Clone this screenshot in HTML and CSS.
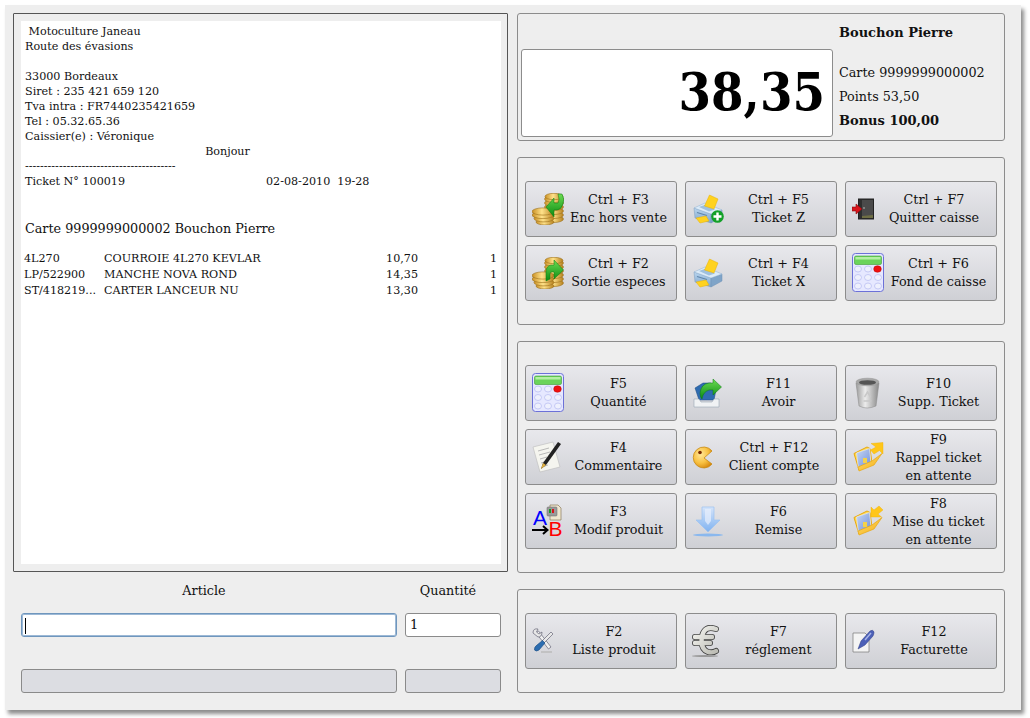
FILE: index.html
```html
<!DOCTYPE html>
<html lang="fr">
<head>
  <meta charset="utf-8">
  <title>Caisse</title>
  <link rel="stylesheet" href="styles.css">
</head>
<body>

<svg class="defs" width="0" height="0">
  <defs>
    <linearGradient id="gold" x1="0" y1="0" x2="1" y2="0">
      <stop offset="0" stop-color="#c98f24"/><stop offset=".45" stop-color="#ffe28a"/><stop offset="1" stop-color="#b57f1c"/>
    </linearGradient>
    <radialGradient id="pac" cx=".4" cy=".35" r=".7">
      <stop offset="0" stop-color="#ffe89a"/><stop offset=".6" stop-color="#f8c040"/><stop offset="1" stop-color="#d88a10"/>
    </radialGradient>
    <linearGradient id="green" x1="0" y1="0" x2="0" y2="1">
      <stop offset="0" stop-color="#6cdc52"/><stop offset="1" stop-color="#0a8a12"/>
    </linearGradient>
    <linearGradient id="steel" x1="0" y1="0" x2="1" y2="0">
      <stop offset="0" stop-color="#9a9a9a"/><stop offset=".4" stop-color="#ececec"/><stop offset="1" stop-color="#888"/>
    </linearGradient>
    <linearGradient id="printer" x1="0" y1="0" x2="0" y2="1">
      <stop offset="0" stop-color="#b8d4ee"/><stop offset="1" stop-color="#7ea6cc"/>
    </linearGradient>
    <linearGradient id="sky" x1="0" y1="0" x2="0" y2="1">
      <stop offset="0" stop-color="#d5e4fa"/><stop offset="1" stop-color="#7fb2f0"/>
    </linearGradient>
    <linearGradient id="folder" x1="0" y1="0" x2="1" y2="1">
      <stop offset="0" stop-color="#ffe070"/><stop offset="1" stop-color="#f4ac14"/>
    </linearGradient>
    <linearGradient id="page" x1="0" y1="0" x2="1" y2="1">
      <stop offset="0" stop-color="#c8d8f4"/><stop offset="1" stop-color="#6f8ed8"/>
    </linearGradient>
    <linearGradient id="euro" x1="0" y1="0" x2="1" y2="1">
      <stop offset="0" stop-color="#f4f4f0"/><stop offset="1" stop-color="#bcbcb4"/>
    </linearGradient>

    <symbol id="coins" viewBox="0 0 32 32">
      <g fill="url(#gold)" stroke="#9c6f17" stroke-width=".6">
        <ellipse cx="22" cy="26" rx="9.500" ry="3.500"/>
        <ellipse cx="22" cy="22" rx="9.500" ry="3.500"/>
        <ellipse cx="22" cy="18" rx="9.500" ry="3.500"/>
        <ellipse cx="22" cy="14" rx="9.500" ry="3.500"/>
        <ellipse cx="22" cy="10" rx="9.500" ry="3.500"/>
        <ellipse cx="22" cy="6" rx="9.500" ry="3.500"/>
        <ellipse cx="22" cy="3.500" rx="9" ry="3.200"/>
        <ellipse cx="13" cy="29" rx="9" ry="3"/>
        <ellipse cx="12" cy="25.500" rx="10" ry="3.400"/>
        <ellipse cx="11" cy="22" rx="11" ry="3.600"/>
        <ellipse cx="11" cy="18.500" rx="11" ry="3.600"/>
      </g>
    </symbol>

    <symbol id="printer-body" viewBox="0 0 32 32">
      <path d="M2 15 L19 21 V30 L3 25Z" fill="url(#printer)" stroke="#7d9cbc" stroke-width=".5"/>
      <path d="M19 21 L30 17 V24 L19 30Z" fill="#7fa4c8" stroke="#6f90b4" stroke-width=".5"/>
      <path d="M2 15 L13 10 L30 17 L19 21Z" fill="#dcebf8" stroke="#8fb0d0" stroke-width=".5"/>
      <path d="M7 14 L14 11.500 L23 16.500 L17 18.500Z" fill="#9fc0de"/>
      <path d="M12.500 13 L17.500 2 L26 6 L22 16Z" fill="#ffd21f" stroke="#e8b000" stroke-width=".5"/>
      <path d="M5 19.500 L15 22.500" stroke="#5f86ac" stroke-width="1.200"/>
      <path d="M4 25 L14 23 L17 28 L8 30Z" fill="#ffd21f" stroke="#e8b000" stroke-width=".5"/>
    </symbol>

    <symbol id="calc" viewBox="0 0 32 40">
      <rect x=".5" y=".5" width="31" height="38" rx="3" fill="#e6e8ff" stroke="#6c71d8"/>
      <rect x="2.500" y="3" width="27" height="8.500" rx="1.500" fill="#6bd45a" stroke="#3e9c34" stroke-width=".6"/>
      <rect x="3.500" y="4" width="25" height="2.500" fill="#b4f0a4"/>
      <g fill="#eef0fd" stroke="#b4baf0" stroke-width=".7">
        <ellipse cx="6" cy="16" rx="3.500" ry="3"/><ellipse cx="16" cy="16" rx="3.500" ry="3"/>
        <ellipse cx="6" cy="24.500" rx="3.500" ry="3"/><ellipse cx="16" cy="24.500" rx="3.500" ry="3"/><ellipse cx="26" cy="24.500" rx="3.500" ry="3"/>
        <ellipse cx="6" cy="33" rx="3.500" ry="3"/><ellipse cx="16" cy="33" rx="3.500" ry="3"/><ellipse cx="26" cy="33" rx="3.500" ry="3"/>
      </g>
      <ellipse cx="25.500" cy="16" rx="3.800" ry="3.300" fill="#f01010" stroke="#b00" stroke-width=".5"/>
    </symbol>

    <symbol id="folder-doc" viewBox="0 0 32 32">
      <path d="M2 12.500 L15 6 L18 7.500 L20 22 L7 29Z" fill="#ffd850" stroke="#e8a810" stroke-width="1"/>
      <path d="M4.500 12 L17.500 7.500 L19 22.500 L6.500 27.500Z" fill="url(#page)" stroke="#e8eefa" stroke-width=".6"/>
      <path d="M11 17 h4 v5 h-4z" fill="#f4d24a"/>
      <path d="M7 30 L6 26 L20 20 L30 12.500 L22 24Z" fill="url(#folder)" stroke="#e8a810" stroke-width=".7"/>
    </symbol>
  </defs>
</svg>

<div class="window">

  <div class="left">
    <div class="ticketFrame">
      <div class="ticket">
        <div class="shop">
          <div>&nbsp;Motoculture Janeau</div>
          <div>Route des évasions</div>
          <div>&nbsp;</div>
          <div>33000 Bordeaux</div>
          <div>Siret : 235 421 659 120</div>
          <div>Tva intra : FR7440235421659</div>
          <div>Tel : 05.32.65.36</div>
          <div>Caissier(e) : Véronique</div>
          <div class="hello">Bonjour</div>
          <div>----------------------------------------</div>
          <div class="ticketNo"><span>Ticket N° 100019</span><span>02-08-2010&nbsp;&nbsp;19-28</span></div>
        </div>
        <div class="cardLine">Carte 9999999000002 Bouchon Pierre</div>
        <div class="lines">
          <span>4L270</span><span>COURROIE 4L270 KEVLAR</span><span class="num">10,70</span><span class="num">1</span>
          <span>LP/522900</span><span>MANCHE NOVA ROND</span><span class="num">14,35</span><span class="num">1</span>
          <span>ST/418219...</span><span>CARTER LANCEUR NU</span><span class="num">13,30</span><span class="num">1</span>
        </div>
      </div>
    </div>

    <div class="entry">
      <div class="entryLabel">Article</div>
      <div class="entryLabel">Quantité</div>
      <div class="field focus"><span class="caret"></span></div>
      <div class="field">1</div>
      <div class="field off"></div>
      <div class="field off"></div>
    </div>
  </div>

  <div class="right">

    <div class="panel total">
      <div class="amount">38,35</div>
      <div class="client">
        <div class="clientName">Bouchon Pierre</div>
        <div class="clientCard">Carte 9999999000002</div>
        <div class="clientRow">Points 53,50</div>
        <div class="clientBonus">Bonus 100,00</div>
      </div>
    </div>

    <div class="panel keys">
      <div class="key">
        <svg class="icon" viewBox="0 0 32 32"><use href="#coins"/><path d="M14 14 L22 5 V10 H26 Q28 7 26 1 L30 1 Q33 6 31 11 Q29 17 25 17 H22 V24Z" fill="url(#green)" stroke="#0a7a10" stroke-width=".5"/></svg>
        <div class="keyText">Ctrl + F3<br>Enc hors vente</div>
      </div>
      <div class="key">
        <svg class="icon" viewBox="0 0 32 32"><use href="#printer-body"/><circle cx="25.500" cy="23.500" r="6.300" fill="#12a028"/><path d="M25.500 19.500 V27.500 M21.500 23.500 H29.500" stroke="#fff" stroke-width="2.400"/></svg>
        <div class="keyText">Ctrl + F5<br>Ticket Z</div>
      </div>
      <div class="key narrow">
        <svg class="icon" viewBox="0 0 24 32"><rect x="6.500" y="6" width="15" height="20" fill="#2e2e2e" stroke="#222"/><path d="M10 7 H21 V25 H10Z" fill="#4a4a4a"/><path d="M10 25 H21 V22 L10 23Z" fill="#6e6e44"/><circle cx="12" cy="15" r=".7" fill="#ddd"/><path d="M0 14 H4 V11 L10 16 L4 21 V18 H0Z" fill="#d8141c" stroke="#8a0a0e" stroke-width=".6"/></svg>
        <div class="keyText">Ctrl + F7<br>Quitter caisse</div>
      </div>
      <div class="key">
        <svg class="icon" viewBox="0 0 32 32"><use href="#coins"/><path d="M31.500 13 L22 3 V8 H19 Q14 9 14 15 V24 L18 22 V17 Q18 15 20 15 H22 V22Z" fill="url(#green)" stroke="#0a7a10" stroke-width=".5"/></svg>
        <div class="keyText">Ctrl + F2<br>Sortie especes</div>
      </div>
      <div class="key">
        <svg class="icon" viewBox="0 0 32 32"><use href="#printer-body"/></svg>
        <div class="keyText">Ctrl + F4<br>Ticket X</div>
      </div>
      <div class="key">
        <svg class="icon tall" viewBox="0 0 32 40"><use href="#calc"/></svg>
        <div class="keyText">Ctrl + F6<br>Fond de caisse</div>
      </div>
    </div>

    <div class="panel keys">
      <div class="key">
        <svg class="icon tall" viewBox="0 0 32 40"><use href="#calc"/></svg>
        <div class="keyText">F5<br>Quantité</div>
      </div>
      <div class="key">
        <svg class="icon" viewBox="0 0 32 32"><path d="M3 11 L11 6 H19 L24 13 L22 23 H7Z" fill="#2f6bb0" stroke="#1d4a80" stroke-width=".5"/><path d="M2 22 H7 L9 25 H20 L22 22 H27 V30 H2Z" fill="#f0f2f4" stroke="#8a9aa8" stroke-width=".5"/><path d="M29.500 10 L21 2 V6 H17 Q9 7 8 16 Q8 20 10 22 Q11 15 17 13 H21 V18Z" fill="url(#green)" stroke="#0a7a10" stroke-width=".5"/></svg>
        <div class="keyText">F11<br>Avoir</div>
      </div>
      <div class="key">
        <svg class="icon" viewBox="0 0 32 32"><path d="M4 6 L7 29 Q15 33 24 29 L27 6Z" fill="url(#steel)" stroke="#888" stroke-width=".5"/><ellipse cx="15.500" cy="5" rx="11.500" ry="3.800" fill="#a8a8a8" stroke="#999" stroke-width=".6"/><ellipse cx="15.500" cy="5.500" rx="8.500" ry="2.300" fill="#555"/><path d="M12.500 20 L15.500 15 L18.500 20 M11.500 24 H19.500" stroke="#c8c8c8" stroke-width="1.500" fill="none"/></svg>
        <div class="keyText">F10<br>Supp. Ticket</div>
      </div>
      <div class="key">
        <svg class="icon" viewBox="0 0 32 32"><path d="M1 6 L21 1 L28 26 L8 31Z" fill="#f5f5ef" stroke="#bbb" stroke-width=".6"/><path d="M6 10 L17 7 M7 14 L18 11 M8 18 L15 16 M9 22 L15 20 M10 26 L16 24" stroke="#aaa" stroke-width=".8"/><path d="M9 28 L11 22 L26 1 L29 3 L14 24Z" fill="#222"/><path d="M9 28 L11 22 L14 24Z" fill="#e0b040"/></svg>
        <div class="keyText">F4<br>Commentaire</div>
      </div>
      <div class="key narrow">
        <svg class="icon" viewBox="0 0 24 32"><path d="M20 23 A10.500 10.500 0 1 1 20 10 L12 17Z" fill="url(#pac)" stroke="#c88a14" stroke-width=".8"/><circle cx="8" cy="11.500" r="1.800" fill="#7a2a00"/></svg>
        <div class="keyText">Ctrl + F12<br>Client compte</div>
      </div>
      <div class="key">
        <svg class="icon" viewBox="0 0 32 32"><use href="#folder-doc"/><path d="M19 2.500 L31 1.500 V13 L27.500 9.500 L22 13 L18.500 9 L24 6Z" fill="#ffc61a" stroke="#f0b000" stroke-width=".4"/></svg>
        <div class="keyText threeLines">F9<br>Rappel ticket<br>en attente</div>
      </div>
      <div class="key">
        <svg class="icon tall" viewBox="0 -4 32 40">
          <path d="M18 0 H26 L29 3 V15 H18Z" fill="#efe6cf" stroke="#8a7a5a" stroke-width=".7"/>
          <rect x="15" y="2" width="10" height="9" rx="1" fill="#9a9a9a" stroke="#666" stroke-width=".5"/>
          <path d="M17 4 h2 v4 h-2z" fill="#1a9a28"/><path d="M20 4 h2 v4 h-2z" fill="#d8141c"/>
          <text class="abLetter abA" x="1" y="20">A</text>
          <text class="abLetter abB" x="16.500" y="31">B</text>
          <path d="M0 25 H15 M11 21 L15.500 25 L11 29" stroke="#000" stroke-width="2" fill="none"/>
        </svg>
        <div class="keyText">F3<br>Modif produit</div>
      </div>
      <div class="key">
        <svg class="icon" viewBox="0 0 32 32"><path d="M10 2 H22 V15 H28 L16 27 L4 15 H10Z" fill="url(#sky)" stroke="#9cc2f0" stroke-width=".7"/><path d="M13 4 H19 V16 L16 20 L13 16Z" fill="#e8f0fc" opacity=".7"/><ellipse cx="16" cy="30" rx="15" ry="1.500" fill="#8ab8ee"/></svg>
        <div class="keyText">F6<br>Remise</div>
      </div>
      <div class="key">
        <svg class="icon" viewBox="0 0 32 32"><use href="#folder-doc"/><path d="M19 12 V2 L22 5 L27 1 L31 5 L26 9 L29.500 12Z" fill="#ffc61a" stroke="#f0b000" stroke-width=".4"/></svg>
        <div class="keyText threeLines">F8<br>Mise du ticket<br>en attente</div>
      </div>
    </div>

    <div class="panel keys">
      <div class="key narrow">
        <svg class="icon" viewBox="0 0 24 32"><path d="M4 8 L6.500 6 L19 22 L16.500 24Z" fill="#f0f0f0" stroke="#667" stroke-width=".7"/><path d="M1 8 Q1 3 6 4 L4.500 7 L7 9 L10 7 Q10 12 6 12 Z" fill="#e8e8e8" stroke="#667" stroke-width=".7"/><path d="M19 7 L21 9 L12 18 L10 16Z" fill="#e8e8e8" stroke="#667" stroke-width=".7"/><path d="M10.500 15.500 L13 18 L7 25 Q4 27 2.500 25 Q2 22 5 20Z" fill="#2c6db0" stroke="#174a80" stroke-width=".6"/><path d="M9 27 H20" stroke="#bbb" stroke-width="1.500"/></svg>
        <div class="keyText">F2<br>Liste produit</div>
      </div>
      <div class="key">
        <svg class="icon" viewBox="0 0 32 32">
          <g fill="none" stroke-linecap="round">
            <path d="M24 4 Q13 0 10 11 Q8 24 16 27 Q21 28 24 26 M3 12 H20 M3 18 H18" stroke="#444" stroke-width="6"/>
            <path d="M24 4 Q13 0 10 11 Q8 24 16 27 Q21 28 24 26 M3 12 H20 M3 18 H18" stroke="url(#euro)" stroke-width="4.400"/>
          </g>
          <ellipse cx="13" cy="31" rx="13" ry="1" fill="#999"/>
        </svg>
        <div class="keyText">F7<br>réglement</div>
      </div>
      <div class="key narrow">
        <svg class="icon" viewBox="0 0 24 32"><path d="M1 8 H13 L17 12 V27 L1 27Z" fill="#f4f4f4" stroke="#777" stroke-width=".7"/><path d="M6 24 L9 16 L18 6 Q21 4 22 7 Q22 9 21 11 L13 20Z" fill="#4c60b8" stroke="#2c3a80" stroke-width=".5"/><path d="M13 15 L19 8" stroke="#a8b4e8" stroke-width="1.500"/></svg>
        <div class="keyText">F12<br>Facturette</div>
      </div>
    </div>

  </div>
</div>

</body>
</html>
```

FILE: styles.css
```css
html, body {
  margin: 0;
  height: 718px;
  overflow: hidden;
  background: white;
  font-family: "DejaVu Serif", serif;
  color: #111;
}

.defs {
  display: block;
  height: 0;
}

.window {
  display: flex;
  gap: 9px;
  box-sizing: border-box;
  width: 1016px;
  height: 705px;
  margin: 5px 0 0 5px;
  padding: 8px 16px 0 8px;
  background: #eeeeee;
  box-shadow: 3px 4px 4px rgba(0, 0, 0, 0.45);
}

.left {
  width: 495px;
}

.ticketFrame {
  box-sizing: border-box;
  height: 559px;
  padding: 7px 6px 7px 7px;
  border: solid 1px #555;
  border-radius: 1px;
}

.ticket {
  box-sizing: border-box;
  height: 100%;
  padding: 3px 4px 0 3px;
  background: white;
  font-size: 11.15px;
  line-height: 15px;
}

.shop {
  padding-left: 1px;
}

.hello {
  width: 405px;
  text-align: center;
}

.ticketNo {
  display: flex;
}

.ticketNo span:first-child {
  width: 241px;
}

.cardLine {
  margin: 30px 0 0 1px;
  font-size: 12.75px;
  line-height: 20px;
}

.lines {
  display: grid;
  grid-template-columns: 80px 1fr 60px 79px;
  margin-top: 12px;
  line-height: 16px;
}

.num {
  text-align: right;
}

.entry {
  display: grid;
  grid-template-columns: 376px 96px;
  grid-template-rows: 36px auto auto;
  column-gap: 8px;
  padding-left: 8px;
  font-size: 12.75px;
}

.entryLabel {
  align-self: center;
  padding-right: 10px;
  text-align: center;
}

.field {
  box-sizing: border-box;
  height: 24px;
  margin-top: 5px;
  padding-left: 4px;
  border: solid 1px #8a8a8a;
  border-radius: 3px;
  background: white;
  font-size: 13px;
  line-height: 22px;
}

.focus {
  border-color: #6f96bd;
  box-shadow: inset 0 0 0 1px #9db9d6;
  padding-left: 3px;
}

.caret {
  display: inline-block;
  width: 1px;
  height: 16px;
  background: black;
  vertical-align: middle;
}

.off {
  margin-top: 32px;
  background: #dcdde2;
}

.right {
  display: flex;
  flex-direction: column;
  gap: 16px;
  width: 488px;
}

.panel {
  box-sizing: border-box;
  border: solid 1px #8c8c8c;
  border-radius: 3px;
}

.total {
  display: flex;
  gap: 6px;
  height: 128px;
  padding: 35px 0 3px 3px;
}

.amount {
  box-sizing: border-box;
  width: 312px;
  height: 88px;
  padding-right: 7px;
  border: solid 1px #8c8c8c;
  border-radius: 3px;
  background: white;
  font-family: "DejaVu Serif Condensed", "DejaVu Serif", serif;
  font-size: 52px;
  font-stretch: condensed;
  font-weight: bold;
  line-height: 84px;
  text-align: right;
  color: black;
}

.client {
  margin-top: -24px;
  font-size: 12.75px;
}

.clientName,
.clientBonus {
  font-size: 13px;
  font-weight: bold;
}

.clientName {
  height: 16px;
  line-height: 16px;
}

.clientCard {
  margin-top: 20px;
  line-height: 24px;
}

.clientRow,
.clientBonus {
  line-height: 24px;
}

.keys {
  display: grid;
  grid-template-columns: repeat(3, 152px);
  grid-auto-rows: 56px;
  gap: 8px;
  padding: 23px 7px;
}

.key {
  display: flex;
  align-items: center;
  box-sizing: border-box;
  padding: 0 3px 0 6px;
  border: solid 1px #8c8c8c;
  border-radius: 3px;
  background: linear-gradient(#e8e8ec, #cfd0d5);
  font-size: 12.75px;
  line-height: 18px;
  color: #111;
}

.icon {
  flex: none;
  width: 32px;
  height: 32px;
}

.tall {
  height: 40px;
}

.narrow .icon {
  width: 24px;
  margin-right: -1px;
}

.keyText {
  flex: 1;
  text-align: center;
  white-space: nowrap;
}

.threeLines {
  margin-top: 2px;
}

.abLetter {
  font-family: "Liberation Sans", sans-serif;
  font-size: 21px;
}

.abA {
  fill: #0000ff;
}

.abB {
  fill: #ff0000;
}
```
